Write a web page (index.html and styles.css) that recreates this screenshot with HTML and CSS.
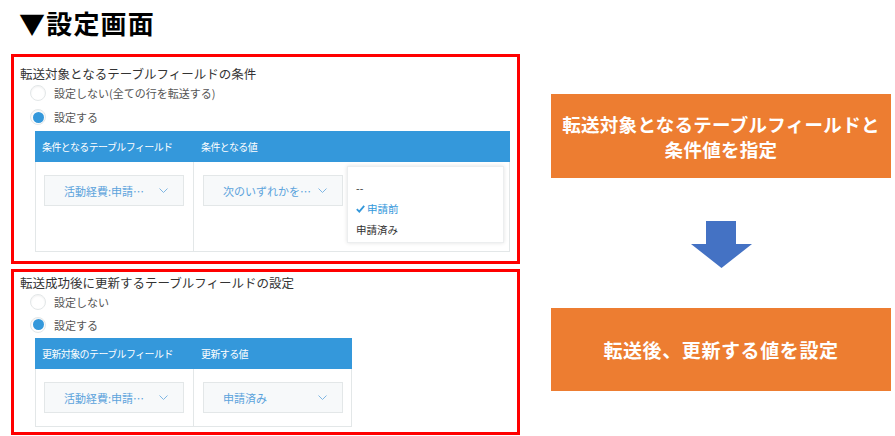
FILE: index.html
```html
<!DOCTYPE html>
<html lang="ja">
<head>
<meta charset="utf-8">
<link rel="stylesheet" href="styles.css">
</head>
<body>
<div class="page">
  <div class="left">
    <h1 class="title">▼設定画面</h1>

    <section class="panel panel-cond">
      <div class="heading">転送対象となるテーブルフィールドの条件</div>
      <div class="radio"><span class="dot"></span><span>設定しない(全ての行を転送する)</span></div>
      <div class="radio"><span class="dot on"></span><span>設定する</span></div>
      <div class="table table-wide">
        <div class="th">条件となるテーブルフィールド</div>
        <div class="th">条件となる値</div>
        <div class="td td-first">
          <div class="select"><span>活動経費:申請…</span><svg class="chev" width="9" height="5" viewBox="0 0 9 5"><polyline points="0.5,0.5 4.5,4.5 8.5,0.5" fill="none" stroke="#7fb6e3" stroke-width="1"/></svg></div>
        </div>
        <div class="td td-last">
          <div class="select"><span>次のいずれかを…</span><svg class="chev" width="9" height="5" viewBox="0 0 9 5"><polyline points="0.5,0.5 4.5,4.5 8.5,0.5" fill="none" stroke="#7fb6e3" stroke-width="1"/></svg></div>
          <div class="menu">
            <div class="item">--</div>
            <div class="item item-sel"><svg class="check" width="9" height="8" viewBox="0 0 9 8"><polyline points="0.8,4.2 3.3,6.6 8.2,0.9" fill="none" stroke="#3498db" stroke-width="1.8"/></svg>申請前</div>
            <div class="item">申請済み</div>
          </div>
        </div>
      </div>
    </section>

    <section class="panel panel-update">
      <div class="heading">転送成功後に更新するテーブルフィールドの設定</div>
      <div class="radio"><span class="dot"></span><span>設定しない</span></div>
      <div class="radio"><span class="dot on"></span><span>設定する</span></div>
      <div class="table table-narrow">
        <div class="th">更新対象のテーブルフィールド</div>
        <div class="th">更新する値</div>
        <div class="td td-first">
          <div class="select"><span>活動経費:申請…</span><svg class="chev" width="9" height="5" viewBox="0 0 9 5"><polyline points="0.5,0.5 4.5,4.5 8.5,0.5" fill="none" stroke="#7fb6e3" stroke-width="1"/></svg></div>
        </div>
        <div class="td td-last">
          <div class="select"><span>申請済み</span><svg class="chev" width="9" height="5" viewBox="0 0 9 5"><polyline points="0.5,0.5 4.5,4.5 8.5,0.5" fill="none" stroke="#7fb6e3" stroke-width="1"/></svg></div>
        </div>
      </div>
    </section>
  </div>

  <div class="right">
    <div class="note note-1">転送対象となるテーブルフィールドと<br>条件値を指定</div>
    <svg class="arrow" width="61" height="47" viewBox="0 0 61 47"><polygon points="15,0 45,0 45,23 61,23 30.5,47 0,23 15,23" fill="#4472c4"/></svg>
    <div class="note note-2">転送後、更新する値を設定</div>
  </div>
</div>
</body>
</html>
```

FILE: styles.css
```css
* { box-sizing: border-box; }

body {
  margin: 0;
  background: #ffffff;
  font-family: "Noto Sans CJK JP", "Noto Sans", sans-serif;
  color: #333333;
}

.page {
  display: flex;
  align-items: flex-start;
}

.left {
  padding-left: 11px;
  width: 520px;
}

.title {
  margin: 0;
  height: 54px;
  padding: 7px 0 0 8px;
  font-size: 26px;
  line-height: 32px;
  font-weight: 700;
  color: #000000;
  letter-spacing: 1.2px;
}

.panel {
  width: 509px;
  border: 3px solid #ff0000;
  padding-left: 6px;
}

.panel-cond {
  height: 210px;
  padding-top: 9px;
}

.panel-update {
  height: 166px;
  margin-top: 5px;
  padding-top: 3px;
}

.heading {
  font-size: 12.5px;
  line-height: 15px;
  color: #333333;
}

.radio {
  display: flex;
  align-items: center;
  height: 24px;
  padding-left: 10px;
  font-size: 11px;
  color: #555555;
}

.panel-update .radio { height: 23px; }
.panel-update .radio:first-of-type { margin-top: 2px; }

.dot {
  width: 16px;
  height: 16px;
  border-radius: 50%;
  border: 1px solid #e3e7e8;
  background: #ffffff;
  box-shadow: inset 0 1px 2px rgba(0, 0, 0, 0.06);
  margin-right: 8px;
  display: flex;
  align-items: center;
  justify-content: center;
}

.dot.on::after {
  content: "";
  width: 11px;
  height: 11px;
  border-radius: 50%;
  background: #3498db;
}

.table {
  display: grid;
  margin-top: 2px;
  margin-left: 15px;
}

.table-wide {
  grid-template-columns: 158px 317px;
  grid-template-rows: 31px 90px;
}

.table-narrow {
  grid-template-columns: 158px 159px;
  grid-template-rows: 31px 58px;
}

.th {
  background: #3498db;
  color: #ffffff;
  font-size: 10px;
  letter-spacing: -0.6px;
  display: flex;
  align-items: center;
  padding-left: 7px;
}

.th + .th { padding-left: 8px; }

.td {
  border-bottom: 1px solid #e3e7e8;
  border-left: 1px solid #e3e7e8;
  padding-top: 13px;
}

.td-first { padding-left: 8px; }

.td-last {
  border-right: 1px solid #e3e7e8;
  padding-left: 9px;
  position: relative;
}

.select {
  width: 140px;
  height: 31px;
  background: #f7f9fa;
  border: 1px solid #e3e7e8;
  display: flex;
  align-items: center;
  justify-content: space-between;
  padding: 0 15px 0 19px;
  font-size: 11px;
  color: #5ba3dc;
}

.chev { display: block; }

.menu {
  position: absolute;
  left: 153px;
  top: 4px;
  width: 157px;
  height: 77px;
  background: #ffffff;
  border: 1px solid #eceeef;
  box-shadow: 0 0 4px rgba(0, 0, 0, 0.12);
  padding: 10px 0 0 8px;
}

.item {
  height: 21px;
  display: flex;
  align-items: center;
  font-size: 10.5px;
  color: #333333;
}

.item-sel { color: #3498db; }

.check { margin-right: 2px; }

.right {
  margin-left: 31px;
  width: 340px;
  padding-top: 94px;
  display: flex;
  flex-direction: column;
  align-items: center;
}

.note {
  width: 340px;
  background: #ed7d31;
  color: #ffffff;
  font-weight: 700;
  font-size: 18.5px;
  letter-spacing: 0.3px;
  text-align: center;
  display: flex;
  align-items: center;
  justify-content: center;
}

.note-1 {
  height: 84px;
  line-height: 25px;
  padding-top: 2px;
}

.arrow {
  display: block;
  margin-top: 43px;
}

.note-2 {
  height: 83px;
  margin-top: 40px;
  font-size: 19px;
  letter-spacing: 0.6px;
}
```
